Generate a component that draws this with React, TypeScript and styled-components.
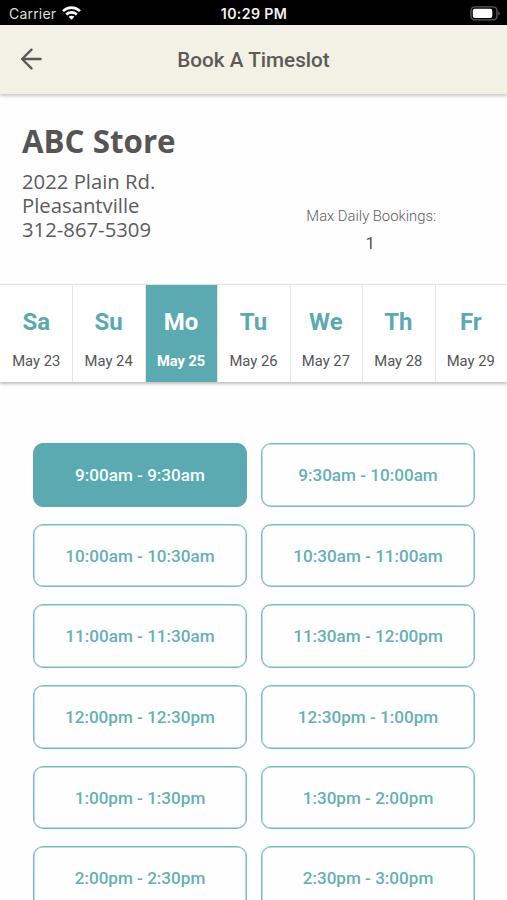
import React from "react";
import styled, { createGlobalStyle } from "styled-components";

const teal = "#5caab1";

const GlobalStyle = createGlobalStyle`
  * { box-sizing: border-box; }
  html, body { margin: 0; padding: 0; background: #fefefe; overflow: hidden; }
  button { appearance: none; margin: 0; padding: 0; border: 0; background: none; font: inherit; color: inherit; }
`;

const Screen = styled.main`
  width: 507px;
  height: 900px;
  overflow: hidden;
  display: flex;
  flex-direction: column;
  background: #fefefe;
  color: #555;
  font-family: Roboto, sans-serif;
`;

const StatusBar = styled.div`
  height: 25px;
  flex: none;
  display: grid;
  grid-template-columns: 1fr auto 1fr;
  align-items: center;
  padding: 3px 6px 0 7px;
  background: #000;
  color: #fff;
  font-family: Inter, sans-serif;
  font-size: 14px;
  line-height: 20px;
`;

const Carrier = styled.div`
  display: flex;
  align-items: center;
  gap: 6px;
  padding-left: 2px;
  color: #dedede;
  letter-spacing: 0.2px;
  svg { margin-top: -3px; }
`;

const Clock = styled.div`
  font-weight: 600;
  font-size: 14.2px;
  letter-spacing: 0.35px;
  color: #f2f2f2;
`;

const Battery = styled.div`
  display: flex;
  justify-content: flex-end;
  margin-top: -2px;
`;

const Header = styled.header`
  height: 69px;
  flex: none;
  display: grid;
  grid-template-columns: 62px 1fr 62px;
  align-items: center;
  background: #f3f0e5;
  box-shadow: 0 2px 3px rgba(0, 0, 0, 0.22);
`;

const BackButton = styled.button`
  height: 40px;
  display: flex;
  align-items: center;
  justify-content: center;
  margin-top: -2px;
`;

const Title = styled.h1`
  margin: 0;
  text-align: center;
  font-size: 20.7px;
  font-weight: 500;
  line-height: 24px;
  color: #5b5a56;
`;

const StoreInfo = styled.section`
  height: 190px;
  flex: none;
  display: flex;
  justify-content: space-between;
  padding: 25px 71px 0 22px;
`;

const StoreName = styled.h2`
  margin: 0 0 6px;
  font-family: "Open Sans", sans-serif;
  font-size: 31.3px;
  font-weight: 700;
  line-height: 44px;
`;

const Address = styled.address`
  font-family: "Open Sans", sans-serif;
  font-style: normal;
  font-size: 20.3px;
  line-height: 24px;
  white-space: pre-line;
  color: #5c5c5c;
`;

const Limit = styled.div`
  margin-top: 87px;
  text-align: center;
`;

const LimitLabel = styled.div`
  font-size: 14.8px;
  font-weight: 300;
  line-height: 20px;
  color: #5d5d5d;
`;

const LimitValue = styled.div`
  margin-top: 7px;
  padding-right: 2px;
  font-size: 17px;
  line-height: 20px;
`;

const DayStrip = styled.nav`
  height: 98px;
  flex: none;
  display: grid;
  grid-template-columns: repeat(7, 1fr);
  border-top: 1px solid #e2e2e2;
  background: #fff;
  box-shadow: 0 2px 3px rgba(0, 0, 0, 0.25);
`;

const Day = styled.button<{ $active?: boolean }>`
  display: flex;
  flex-direction: column;
  align-items: center;
  padding: 23px 1px 0 0;
  border-left: 1px solid #e6e6e6;
  background: ${({ $active }) => ($active ? teal : "transparent")};
  color: ${({ $active }) => ($active ? "#fff" : "#555")};
  &:first-child { border-left-color: transparent; }
`;

const DayName = styled.span<{ $active?: boolean }>`
  font-size: 24px;
  font-weight: 700;
  line-height: 29px;
  color: ${({ $active }) => ($active ? "#fff" : teal)};
`;

const DayDate = styled.span<{ $active?: boolean }>`
  margin-top: 14px;
  font-size: ${({ $active }) => ($active ? "14.6px" : "14.8px")};
  font-weight: ${({ $active }) => ($active ? 700 : 400)};
  line-height: 20px;
  white-space: nowrap;
`;

const Slots = styled.section`
  display: grid;
  grid-template-columns: 214px 214px;
  grid-auto-rows: 63.5px;
  gap: 17.2px 14px;
  padding: 61px 0 0 33px;
`;

const Slot = styled.button<{ $active?: boolean }>`
  padding-top: 0.4px;
  border: 1px solid ${({ $active }) => ($active ? teal : "#7abbc0")};
  border-radius: 10px;
  background: ${({ $active }) => ($active ? teal : "#fefefe")};
  box-shadow: inset 0 0 0 0.5px ${({ $active }) => ($active ? teal : "#7abbc0")};
  color: ${({ $active }) => ($active ? "#f4ffff" : "#66b0b4")};
  font-size: 17.1px;
  font-weight: 500;
  line-height: 22px;
`;

const days = [
  ["Sa", "May 23"],
  ["Su", "May 24"],
  ["Mo", "May 25"],
  ["Tu", "May 26"],
  ["We", "May 27"],
  ["Th", "May 28"],
  ["Fr", "May 29"],
];

const slots = [
  "9:00am - 9:30am",
  "9:30am - 10:00am",
  "10:00am - 10:30am",
  "10:30am - 11:00am",
  "11:00am - 11:30am",
  "11:30am - 12:00pm",
  "12:00pm - 12:30pm",
  "12:30pm - 1:00pm",
  "1:00pm - 1:30pm",
  "1:30pm - 2:00pm",
  "2:00pm - 2:30pm",
  "2:30pm - 3:00pm",
];

const WifiIcon = () => (
  <svg width="19" height="14" viewBox="0 0 19 14" fill="none" stroke="#fff" strokeWidth="2.6">
    <path d="M1 5.1C5.8.5 13.2.5 18 5.1" />
    <path d="M4.2 8.5c3-2.8 7.6-2.8 10.6 0" />
    <path d="M9.5 13.7 6.6 10.7c1.6-1.4 4.2-1.4 5.8 0z" fill="#fff" stroke="none" />
  </svg>
);

const BatteryIcon = () => (
  <svg width="31" height="15" viewBox="0 0 31 15">
    <rect x="1" y=".9" width="26" height="13" rx="4" fill="none" stroke="#5c5c5c" strokeWidth="1.4" />
    <rect x="2.8" y="2.8" width="19.5" height="9.2" rx="2" fill="#fff" />
    <path d="M28.3 5.3c2 .8 2 3.5 0 4.3z" fill="#5c5c5c" />
  </svg>
);

const BackIcon = () => (
  <svg width="22" height="22" viewBox="0 0 22 22" fill="none" stroke="#5a5955" strokeWidth="2.4" strokeLinecap="round" strokeLinejoin="round">
    <path d="M20.6 11H2.1M11.5 1.7 2.1 11l9.4 9.3" />
  </svg>
);

export default function App() {
  return (
    <Screen>
      <GlobalStyle />
      <StatusBar>
        <Carrier>Carrier<WifiIcon /></Carrier>
        <Clock>10:29 PM</Clock>
        <Battery><BatteryIcon /></Battery>
      </StatusBar>
      <Header>
        <BackButton aria-label="Back"><BackIcon /></BackButton>
        <Title>Book A Timeslot</Title>
      </Header>
      <StoreInfo>
        <div>
          <StoreName>ABC Store</StoreName>
          <Address>{"2022 Plain Rd.\nPleasantville\n312-867-5309"}</Address>
        </div>
        <Limit>
          <LimitLabel>Max Daily Bookings:</LimitLabel>
          <LimitValue>1</LimitValue>
        </Limit>
      </StoreInfo>
      <DayStrip>
        {days.map(([name, date]) => {
          const active = name === "Mo";
          return (
            <Day key={name} $active={active}>
              <DayName $active={active}>{name}</DayName>
              <DayDate $active={active}>{date}</DayDate>
            </Day>
          );
        })}
      </DayStrip>
      <Slots>
        {slots.map((label, index) => (
          <Slot key={label} $active={index === 0}>{label}</Slot>
        ))}
      </Slots>
    </Screen>
  );
}
